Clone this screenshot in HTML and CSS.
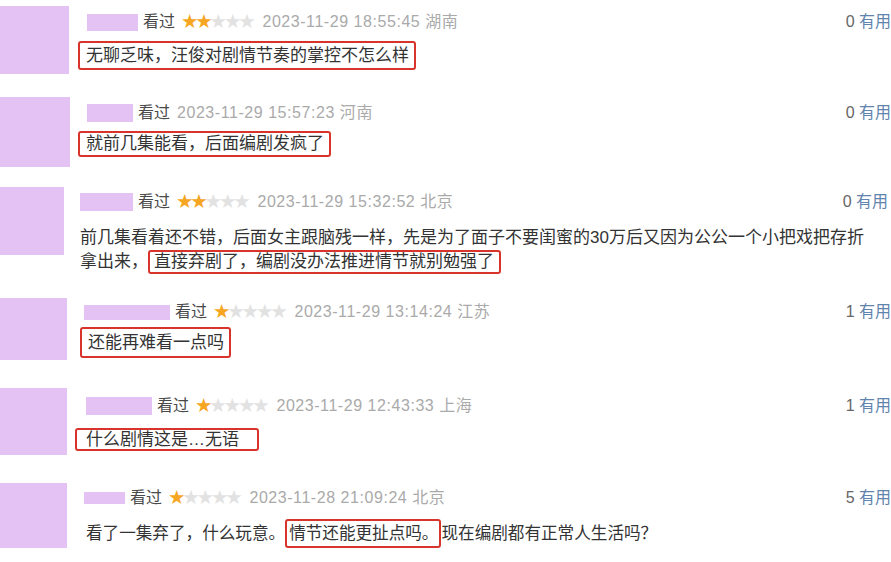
FILE: index.html
```html
<!DOCTYPE html>
<html lang="zh-CN">
<head>
<meta charset="utf-8">
<title>短评</title>
<link rel="stylesheet" href="styles.css">
</head>
<body>
<div class="list">

  <div class="review r1">
    <div class="avatar"></div>
    <div class="body">
      <div class="meta">
        <span class="name"></span>
        <span class="watched">看过</span>
        <span class="stars"><i class="on">★★</i><i>★★★</i></span>
        <span class="time">2023-11-29 18:55:45 湖南</span>
        <span class="useful"><b>0</b> 有用</span>
      </div>
      <div class="content"><span class="mark">无聊乏味，汪俊对剧情节奏的掌控不怎么样</span></div>
    </div>
  </div>

  <div class="review r2">
    <div class="avatar"></div>
    <div class="body">
      <div class="meta">
        <span class="name"></span>
        <span class="watched">看过</span>
        <span class="time">2023-11-29 15:57:23 河南</span>
        <span class="useful"><b>0</b> 有用</span>
      </div>
      <div class="content"><span class="mark">就前几集能看，后面编剧发疯了</span></div>
    </div>
  </div>

  <div class="review r3">
    <div class="avatar"></div>
    <div class="body">
      <div class="meta">
        <span class="name"></span>
        <span class="watched">看过</span>
        <span class="stars"><i class="on">★★</i><i>★★★</i></span>
        <span class="time">2023-11-29 15:32:52 北京</span>
        <span class="useful"><b>0</b> 有用</span>
      </div>
      <div class="content">前几集看着还不错，后面女主跟脑残一样，先是为了面子不要闺蜜的30万后又因为公公一个小把戏把存折拿出来，<span class="mark">直接弃剧了，编剧没办法推进情节就别勉强了</span></div>
    </div>
  </div>

  <div class="review r4">
    <div class="avatar"></div>
    <div class="body">
      <div class="meta">
        <span class="name"></span>
        <span class="watched">看过</span>
        <span class="stars"><i class="on">★</i><i>★★★★</i></span>
        <span class="time">2023-11-29 13:14:24 江苏</span>
        <span class="useful"><b>1</b> 有用</span>
      </div>
      <div class="content"><span class="mark">还能再难看一点吗</span></div>
    </div>
  </div>

  <div class="review r5">
    <div class="avatar"></div>
    <div class="body">
      <div class="meta">
        <span class="name"></span>
        <span class="watched">看过</span>
        <span class="stars"><i class="on">★</i><i>★★★★</i></span>
        <span class="time">2023-11-29 12:43:33 上海</span>
        <span class="useful"><b>1</b> 有用</span>
      </div>
      <div class="content"><span class="mark">什么剧情这是…无语</span></div>
    </div>
  </div>

  <div class="review r6">
    <div class="avatar"></div>
    <div class="body">
      <div class="meta">
        <span class="name"></span>
        <span class="watched">看过</span>
        <span class="stars"><i class="on">★</i><i>★★★★</i></span>
        <span class="time">2023-11-28 21:09:24 北京</span>
        <span class="useful"><b>5</b> 有用</span>
      </div>
      <div class="content">看了一集弃了，什么玩意。<span class="mark">情节还能更扯点吗。</span>现在编剧都有正常人生活吗？</div>
    </div>
  </div>

</div>
</body>
</html>
```

FILE: styles.css
```css
html, body {
  margin: 0;
  padding: 0;
  background: #fff;
}

body {
  font-family: "Liberation Sans", "Noto Sans CJK SC", sans-serif;
  color: #333;
  width: 891px;
  height: 562px;
  overflow: hidden;
}

.list {
  display: flex;
  flex-direction: column;
}

.review {
  display: flex;
  align-items: flex-start;
  height: var(--h);
}

.avatar {
  flex: none;
  width: var(--aw);
  height: var(--ah);
  margin-top: var(--at);
  background: #e4c3f4;
}

.body {
  flex: 1;
  display: flex;
  flex-direction: column;
  margin-left: var(--bx);
  padding-top: var(--mt);
  min-width: 0;
}

.meta {
  display: flex;
  align-items: center;
  height: 20px;
  font-size: 16px;
  line-height: 20px;
  white-space: nowrap;
}

.name {
  width: var(--nw);
  height: var(--nh);
  background: #e4c3f4;
  margin-right: 5px;
}

.watched {
  color: #494949;
  margin-right: 7px;
}

.stars {
  font-family: "DejaVu Sans", sans-serif;
  font-size: 19.5px;
  letter-spacing: -3.2px;
  line-height: 20px;
  margin-left: -1px;
  margin-right: 10px;
  color: #e2e2e2;
}

.stars i {
  font-style: normal;
}

.stars i.on {
  color: #f6a623;
}

.time {
  color: #aaa;
  letter-spacing: 0.55px;
}

.useful {
  margin-left: auto;
  margin-right: var(--ur);
  color: #5f84ad;
}

.useful b {
  font-weight: normal;
  color: #666;
}

.content {
  font-size: 17px;
  line-height: 24px;
  color: #333;
  margin-top: var(--ct);
  margin-left: var(--cx);
}

.mark {
  display: inline-block;
  border: 2px solid #d8342c;
  border-radius: 3px;
  padding: 0 var(--pr) 0 var(--pl);
  line-height: var(--ml);
}

.r1 { --h: 90px; --at: 6px; --aw: 69px; --ah: 68px; --bx: 18px; --mt: 12px; --nw: 51px; --nh: 17px; --ct: 9px; --cx: -9px; --ml: 25px; --ur: 0px; --pl: 6px; --pr: 5px; }
.r2 { --h: 90px; --at: 7px; --aw: 70px; --ah: 70px; --bx: 17px; --mt: 13px; --nw: 46px; --nh: 18px; --ct: 8px; --cx: -9px; --ml: 22px; --ur: 0px; --pl: 6px; --pr: 5px; }
.r3 { --h: 110px; --at: 7px; --aw: 64px; --ah: 68px; --bx: 16px; --mt: 12px; --nw: 53px; --nh: 18px; --ct: 14px; --cx: 0px; --ml: 20px; --ur: 3px; --pl: 4px; --pr: 5px; }
.r3 .content { width: 795px; line-height: 24px; }
.r3 .mark { vertical-align: top; }
.r4 { --h: 90px; --at: 8px; --aw: 67px; --ah: 62px; --bx: 17px; --mt: 12px; --nw: 86px; --nh: 15px; --ct: 5px; --cx: -4px; --ml: 27px; --ur: 0px; --pl: 6px; --pr: 5px; }
.r5 { --h: 90px; --at: 8px; --aw: 67px; --ah: 67px; --bx: 19px; --mt: 16px; --nw: 66px; --nh: 18px; --ct: 12px; --cx: -11px; --ml: 19px; --ur: 0px; --pl: 9px; --pr: 18px; }
.r6 { --h: 92px; --at: 13px; --aw: 67px; --ah: 65px; --bx: 17px; --mt: 18px; --nw: 41px; --nh: 12px; --ct: 11px; --cx: 2px; --ml: 25px; --ur: 0px; --pl: 2px; --pr: 1px; }
.r6 .content { font-size: 16.6px; }
```
